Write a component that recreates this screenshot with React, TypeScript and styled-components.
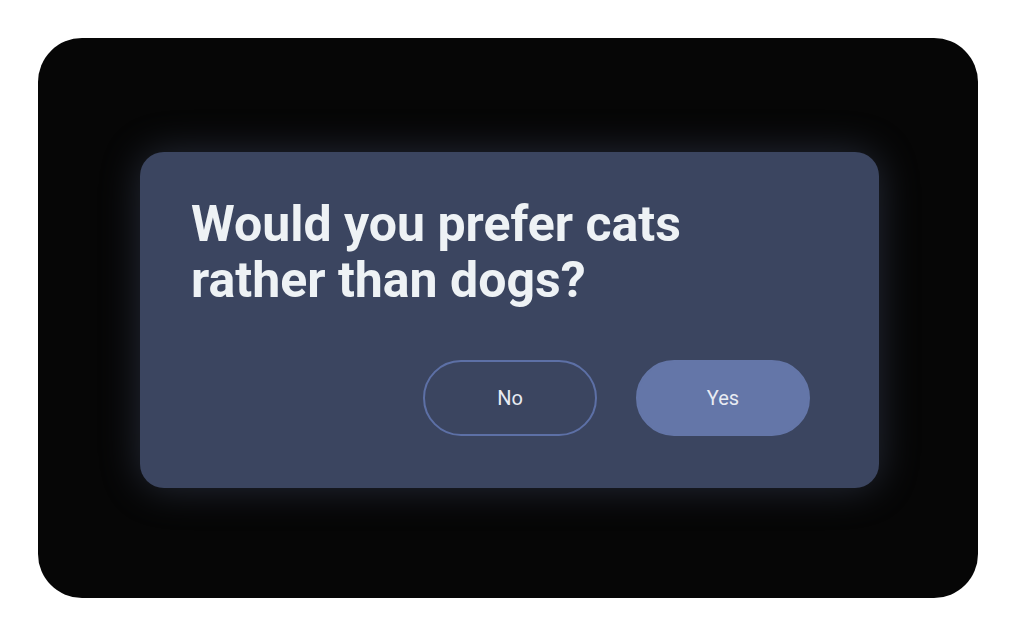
import React from 'react'
import styled, { createGlobalStyle } from 'styled-components'

const GlobalStyle = createGlobalStyle`
  html, body {
    margin: 0;
    padding: 0;
    background: #ffffff;
  }
  body {
    font-family: Roboto, "Noto Sans", sans-serif;
  }
`

function App() {
  return (
    <>
      <GlobalStyle />
      <Page>
        <Frame>
          <Dialog>
            <Title>Would you prefer cats<br />rather than dogs?</Title>
            <Actions>
              <Button>No</Button>
              <Button primary>Yes</Button>
            </Actions>
          </Dialog>
        </Frame>
      </Page>
    </>
  )
}

const Page = styled.div`
  width: 1012px;
  height: 638px;
  padding: 38px 34px 40px 38px;
  box-sizing: border-box;
`
const Frame = styled.div`
  width: 940px;
  height: 560px;
  background: #060606;
  border-radius: 44px;
  display: flex;
  align-items: flex-start;
  padding: 114px 0 0 102px;
  box-sizing: border-box;
`
const Dialog = styled.div`
  width: 739px;
  height: 336px;
  box-sizing: border-box;
  background: #3b4560;
  border-radius: 24px;
  box-shadow: 0 0 40px rgba(110, 125, 170, 0.3);
  padding: 44px 69px 52px 51px;
  display: flex;
  flex-direction: column;
`
const Title = styled.h1`
  margin: 0;
  font-family: Roboto, sans-serif;
  font-weight: 700;
  font-size: 50px;
  line-height: 56px;
  color: #eef2f5;
`
const Actions = styled.div`
  margin-top: auto;
  display: flex;
  justify-content: flex-end;
  gap: 39px;
`
const Button = styled.button<{ primary?: boolean }>`
  width: 174px;
  height: 76px;
  box-sizing: border-box;
  border-radius: 38px;
  border: 2px solid ${p => (p.primary ? '#6476a8' : '#5d70a6')};
  background: ${p => (p.primary ? '#6476a8' : 'transparent')};
  color: #e8ebf2;
  font-family: Roboto, sans-serif;
  font-size: 20px;
  cursor: pointer;
`

export default App
